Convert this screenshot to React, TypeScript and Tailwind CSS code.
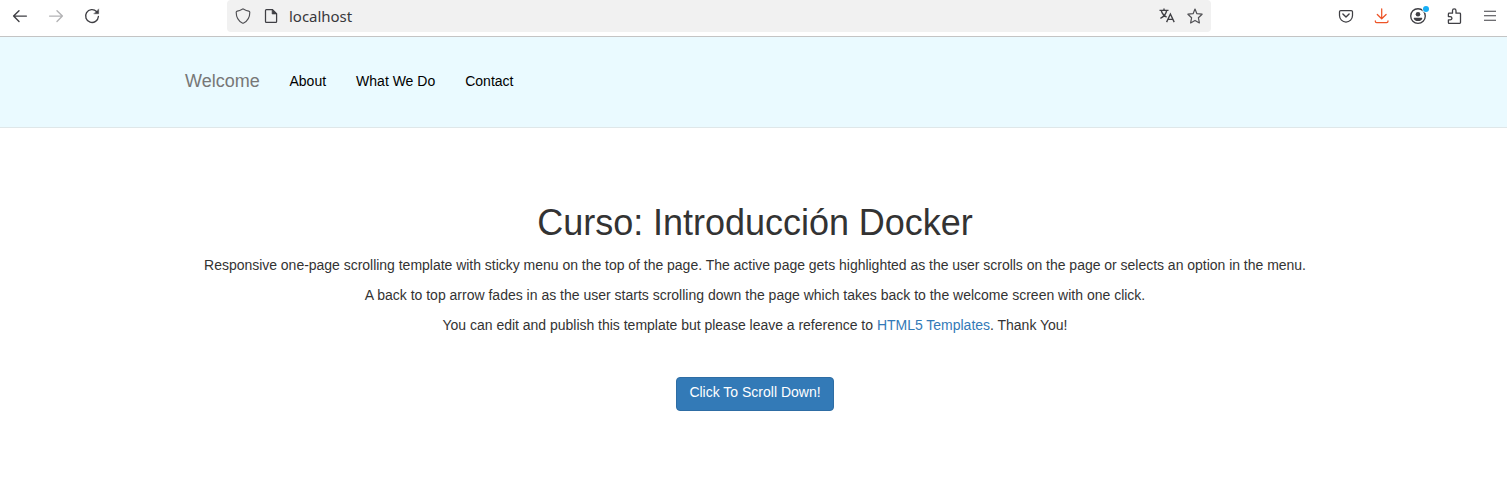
import type { ReactNode } from 'react';

function Icon({ children, className = 'text-[#3f3f44]' }: { children: ReactNode; className?: string }) {
  return (
    <svg
      viewBox="0 0 16 16"
      className={`size-4 shrink-0 overflow-visible ${className}`}
      fill="none"
      stroke="currentColor"
      strokeWidth="1.25"
      strokeLinecap="round"
      strokeLinejoin="round"
    >
      {children}
    </svg>
  );
}

function Toolbar() {
  return (
    <div className="flex h-[37px] border-b border-[#c4c4c4] bg-white">
      <div className="flex h-8 w-[227px] shrink-0 items-center gap-5 pl-3">
        <Icon>
          <path d="M14.4 8.100H1.600M7 2.700 1.600 8.100 7 13.500" strokeWidth="1.400" />
        </Icon>
        <Icon className="text-[#b3b3b5]">
          <path d="M1.600 8.100h12.800M9 2.700l5.400 5.400L9 13.500" strokeWidth="1.400" />
        </Icon>
        <Icon>
          <path d="M12.600 3.600A6.400 6.400 0 1 0 14.400 8.500" strokeWidth="1.350" />
          <path d="M14.700 1.200v4.600h-4.600z" fill="currentColor" strokeWidth="0.400" />
        </Icon>
      </div>
      <div className="flex h-8 w-[984px] shrink-0 items-center rounded bg-[#f1f1f1] px-2">
        <Icon className="text-[#505054]">
          <path d="M8 .8c.4 0 2.200 1.500 5.800 2.300.7.200 1 .5 1 1.200 0 5-2.200 8.700-6.100 10.700-.5.300-.9.300-1.400 0-3.900-2-6.100-5.700-6.100-10.700 0-.7.300-1 1-1.200C5.800 2.300 7.600.8 8 .8z" strokeWidth="1.150" />
        </Icon>
        <Icon className="ml-3 text-[#3f3f44]">
          <path d="M9.500 1.600H3.400c-.6 0-.9.300-.9.900v11c0 .6.300.9.900.9h9.300c.6 0 .9-.3.900-.9V5.700z" />
          <path d="M9.100 1.500v4.500h4.500z" fill="currentColor" strokeWidth="0.600" />
        </Icon>
        <span className="ml-2.5 font-['Noto_Sans',sans-serif] text-[15px] leading-5 tracking-[-0.030px] text-[#38383c]">
          localhost
        </span>
        <Icon className="ml-auto text-[#3f3f44]">
          <path d="M.5 2.300h9M5 .6v1.700M2.300 2.500c.7 3.100 2.900 5.400 5.300 6.700M7.700 2.500C7 6 4.600 8.700 1.400 10.300" strokeLinecap="butt" strokeWidth="1.350" />
          <path d="M7.600 14.100 11.400 6l3.800 8.100M9.100 11.400h4.600" strokeLinecap="butt" strokeLinejoin="miter" strokeWidth="1.350" />
        </Icon>
        <Icon className="ml-3 text-[#505054]">
          <path d="M8 1.100 9.900 5.700l5.200.5-3.700 3.600 1 5.100L8 12.400l-4.400 2.500 1-5.100L.9 6.200l5.200-.5z" strokeWidth="1.200" />
        </Icon>
      </div>
      <div className="flex h-8 flex-1 items-center justify-end gap-5 pr-[9px]">
        <Icon>
          <path d="M2.800 2.500h10.400c.9 0 1.300.4 1.300 1.300v3.700a6.500 6.500 0 0 1-13 0V3.800c0-.9.400-1.300 1.300-1.300z" />
          <path d="M4.900 5.900 8 8.900l3.100-3" strokeWidth="1.400" />
        </Icon>
        <Icon className="text-[#ed5427]">
          <path d="M7.700.8v9.900M3.300 6.500l4.400 4.300 4.400-4.300M1.300 12.900v.3c0 .9.500 1.400 1.400 1.400h9.900c.9 0 1.400-.5 1.400-1.400v-.3" />
        </Icon>
        <Icon>
          <circle cx="8" cy="8" r="7.300" strokeWidth="1.350" />
          <circle cx="8" cy="6.300" r="2.300" fill="currentColor" stroke="none" />
          <path d="M4.500 9.800h7c.6 0 .9.300.7.900-.6 1.500-2 2.400-4.200 2.400s-3.600-.9-4.200-2.400c-.2-.6.100-.9.700-.9z" fill="currentColor" stroke="none" />
          <circle cx="16" cy="1" r="3.700" fill="white" stroke="none" />
          <circle cx="16" cy="1" r="3" fill="#16aef5" stroke="none" />
        </Icon>
        <Icon>
          <path d="M6.500 5.200V2.700c0-2.400 3.500-2.400 3.500 0v2.500h3.700c.5 0 .8.300.8.800v8.600c0 .5-.3.800-.8.800H3.200c-.5 0-.8-.3-.8-.8v-2.700h1.800c2.300 0 2.300-3.300 0-3.300H2.400V6c0-.5.300-.8.800-.8z" strokeWidth="1.300" />
        </Icon>
        <Icon>
          <path d="M2 3.250h12M2 7.750h12M2 12.250h12" strokeLinecap="butt" strokeWidth="1.200" />
        </Icon>
      </div>
    </div>
  );
}

export default function App() {
  return (
    <div className="h-[477px] overflow-hidden bg-white font-['Liberation_Sans',Arial,sans-serif] text-sm leading-5 text-[#333]">
      <Toolbar />
      <nav className="flex h-[91px] border-b border-[#dfe7e9] bg-[#eafaff] pt-[34px] pl-[185px] text-black">
        <a href="#welcome" className="w-[104.500px] text-lg leading-5 text-[#777]">Welcome</a>
        <div className="flex gap-[30px]">
          <a href="#about">About</a>
          <a href="#services">What We Do</a>
          <a href="#contact">Contact</a>
        </div>
      </nav>
      <main className="flex flex-col items-center pt-[75px] pl-[3px] text-center">
        <h1 className="text-[36px] leading-10 tracking-[-0.030px]">Curso: Introducción Docker</h1>
        <p className="mt-3 tracking-[-0.021px]">
          Responsive one-page scrolling template with sticky menu on the top of the page. The active page gets
          highlighted as the user scrolls on the page or selects an option in the menu.
        </p>
        <p className="mt-2.5">
          A back to top arrow fades in as the user starts scrolling down the page which takes back to the welcome
          screen with one click.
        </p>
        <p className="mt-2.5 tracking-[-0.014px]">
          You can edit and publish this template but please leave a reference to{' '}
          <a href="#templates" className="text-[#337ab7]">HTML5 Templates</a>. Thank You!
        </p>
        <button className="mt-[42px] flex h-[34px] w-[158px] justify-center rounded border border-[#2e6da4] bg-[#337ab7] pt-1 text-white">
          Click To Scroll Down!
        </button>
      </main>
    </div>
  );
}
